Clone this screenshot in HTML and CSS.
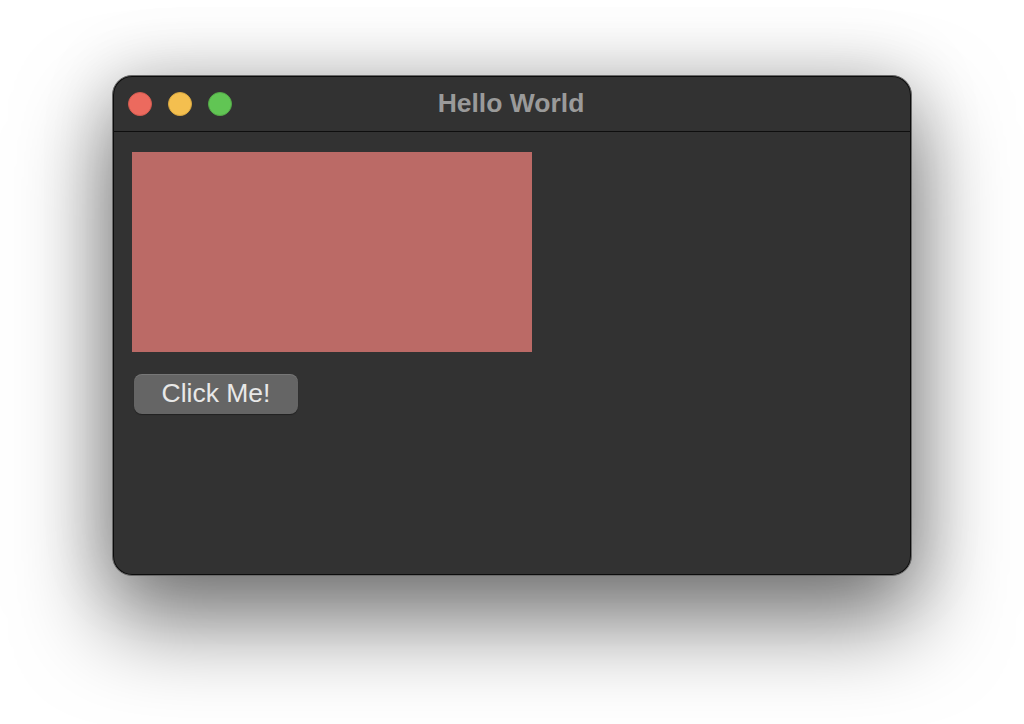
FILE: index.html
```html
<!DOCTYPE html>
<html lang="en">
<head>
<meta charset="utf-8">
<title>Hello World</title>
<link rel="stylesheet" href="styles.css">
</head>
<body>
<div class="window">
  <div class="titlebar">
    <div class="lights">
      <span class="light red"></span>
      <span class="light yellow"></span>
      <span class="light green"></span>
    </div>
    <div class="title">Hello World</div>
    <div class="spacer"></div>
  </div>
  <div class="content">
    <div class="swatch"></div>
    <button class="btn">Click Me!</button>
  </div>
</div>
</body>
</html>
```
FILE: styles.css
```css
html, body {
  margin: 0;
  padding: 0;
  background: #ffffff;
}
body {
  width: 1024px;
  height: 724px;
  overflow: hidden;
  display: flex;
  justify-content: center;
  align-items: flex-start;
  padding-top: 75px;
  box-sizing: border-box;
  font-family: "Liberation Sans", Arial, sans-serif;
}
.window {
  width: 800px;
  height: 501px;
  box-sizing: border-box;
  background: #323232;
  border: 1px solid #6a6a6a;
  border-radius: 20px;
  box-shadow: inset 0 0 0 1px #0c0c0c,
              0 44px 90px 4px rgba(0, 0, 0, 0.5),
              0 0 70px rgba(0, 0, 0, 0.18);
  display: flex;
  flex-direction: column;
}
.titlebar {
  height: 55px;
  border-bottom: 1px solid #0e0e0e;
  display: grid;
  grid-template-columns: 1fr auto 1fr;
  align-items: center;
  padding: 0 15px;
  flex: none;
}
.lights {
  display: flex;
  gap: 16px;
  padding-top: 1px;
}
.light {
  width: 24px;
  height: 24px;
  border-radius: 50%;
  box-sizing: border-box;
}
.red { background: #ec6a5e; border: 1px solid #d25a4f; }
.yellow { background: #f4bf4f; border: 1px solid #d8a73f; }
.green { background: #61c554; border: 1px solid #53a847; }
.title {
  color: #9a9a9a;
  font-weight: bold;
  font-size: 26.5px;
  padding-bottom: 1px;
  transform: translateX(-1px);
}
.content {
  padding: 20px 19px;
  display: flex;
  flex-direction: column;
  align-items: flex-start;
}
.swatch {
  width: 400px;
  height: 200px;
  background: #bb6a66;
}
.btn {
  margin: 22px 0 0 2px;
  width: 164px;
  height: 40px;
  border: none;
  border-radius: 8px;
  background: #656565;
  box-shadow: inset 0 1px 0 rgba(255, 255, 255, 0.12), 0 1px 1px rgba(0, 0, 0, 0.35);
  color: #e8e8e8;
  font-family: "Liberation Sans", Arial, sans-serif;
  font-size: 26.5px;
  padding: 0 0 2px 0;
  line-height: 38px;
  cursor: default;
}
```
